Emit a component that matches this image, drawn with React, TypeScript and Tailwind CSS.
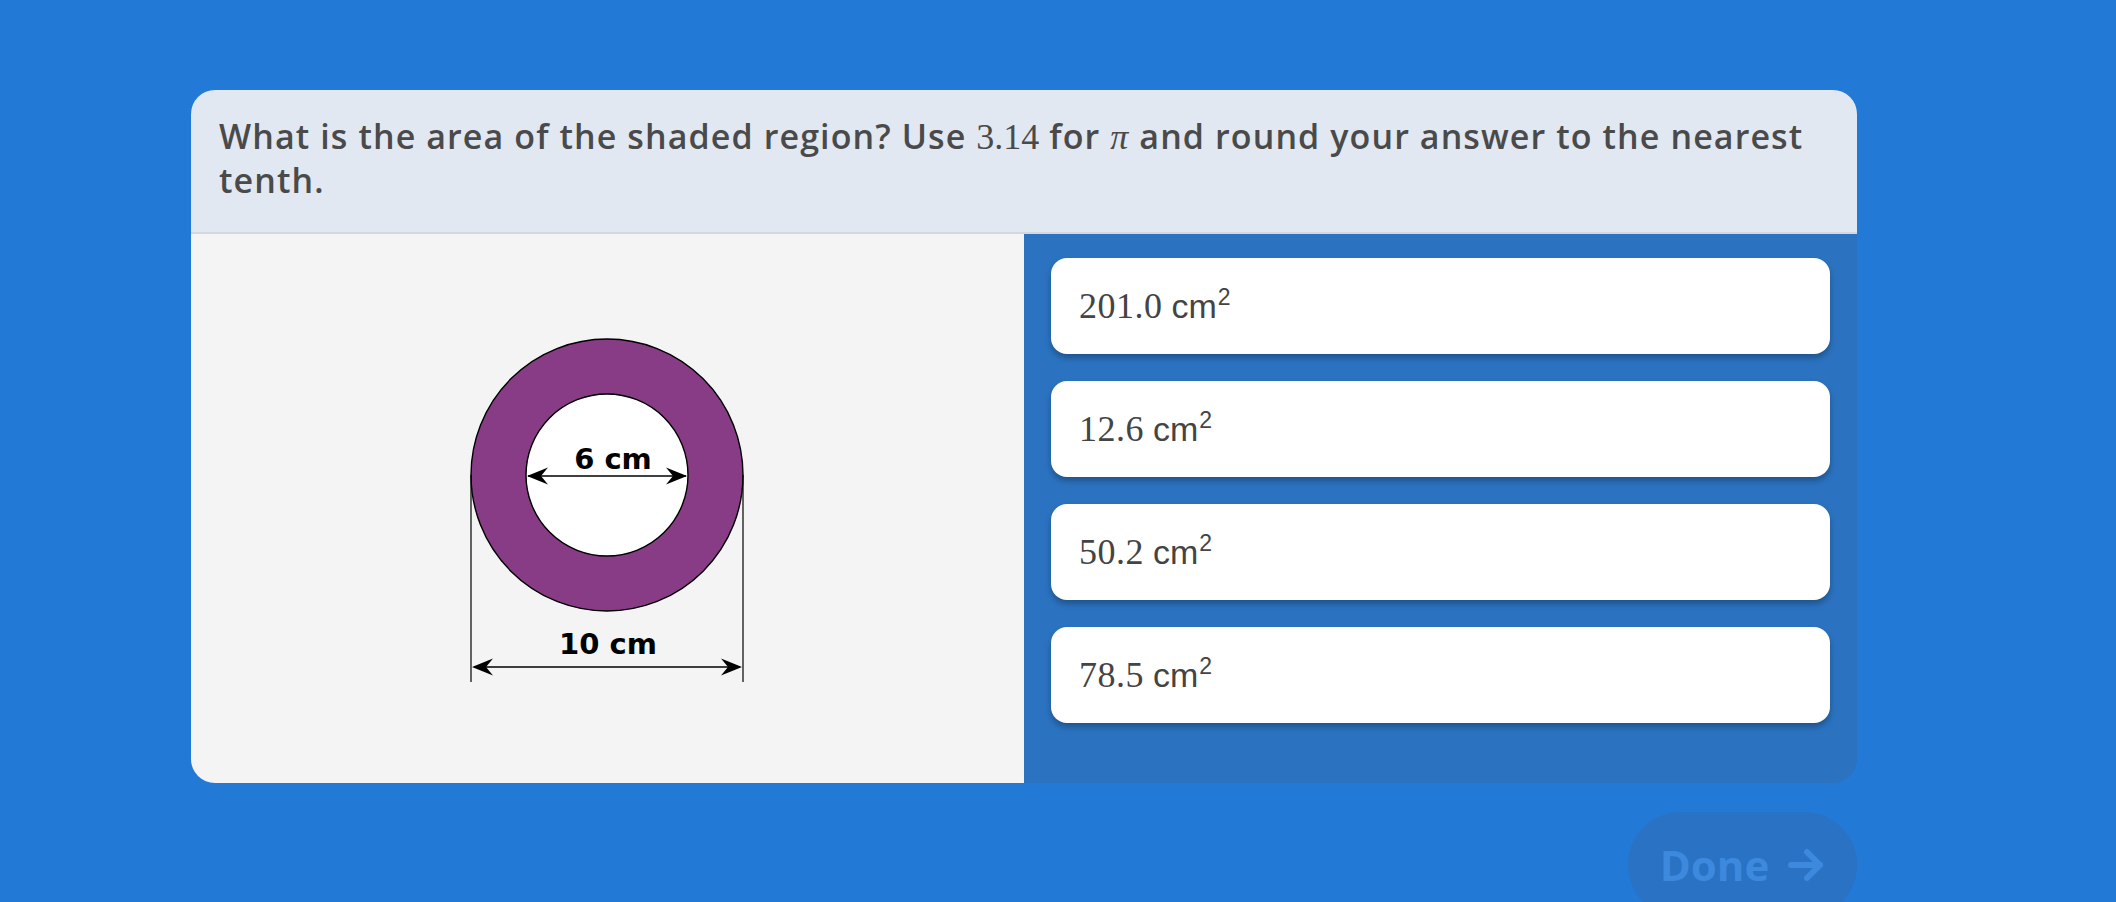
import React from "react";

const answers = ["201.0", "12.6", "50.2", "78.5"];

function Arrow({ x, y, dir }: { x: number; y: number; dir: 1 | -1 }) {
  // dart-shaped arrowhead, tip at (x, y), pointing in dir
  const d = dir;
  return (
    <path
      d={`M ${x} ${y} L ${x - d * 21} ${y - 8.5} L ${x - d * 14} ${y} L ${x - d * 21} ${y + 8.5} Z`}
      fill="#000"
    />
  );
}

function Ring() {
  return (
    <svg width="295" height="360" viewBox="0 0 295 360" className="block">
      <circle cx="147" cy="146" r="136" fill="#883c86" stroke="#000" strokeWidth="1.4" />
      <circle cx="147" cy="146" r="81" fill="#fff" stroke="#000" strokeWidth="1.4" />
      <line x1="11" y1="146" x2="11" y2="353" stroke="#000" strokeWidth="1.2" />
      <line x1="283" y1="146" x2="283" y2="353" stroke="#000" strokeWidth="1.2" />
      <line x1="14" y1="338" x2="280" y2="338" stroke="#000" strokeWidth="1.4" />
      <Arrow x={12} y={338} dir={-1} />
      <Arrow x={282} y={338} dir={1} />
      <line x1="68" y1="147" x2="226" y2="147" stroke="#000" strokeWidth="1.4" />
      <Arrow x={67} y={147} dir={-1} />
      <Arrow x={227} y={147} dir={1} />
      <text
        x="153"
        y="140"
        textAnchor="middle"
        fontFamily="'DejaVu Sans', sans-serif"
        fontWeight="700"
        fontSize="29"
        fill="#000"
      >
        6 cm
      </text>
      <text
        x="148"
        y="325"
        textAnchor="middle"
        fontFamily="'DejaVu Sans', sans-serif"
        fontWeight="700"
        fontSize="29"
        fill="#000"
      >
        10 cm
      </text>
    </svg>
  );
}

export default function App() {
  return (
    <div className="w-full h-[902px] overflow-hidden bg-[#2279d6] font-['Open_Sans',sans-serif]">
      <div className="ml-[191px] pt-[90px] w-[1666px]">
        {/* Question */}
        <div className="bg-[#e1e8f1] rounded-t-[24px] h-[144px] px-[28px] pt-[25px] border-b-2 border-[#d3d8df]">
          <p className="text-[34px] leading-[43px] font-semibold text-[#4a4a4a] tracking-[1.1px]">
            What is the area of the shaded region? Use{" "}
            <span className="font-['Liberation_Serif',serif] font-normal text-[36px] tracking-normal">3.14</span> for{" "}
            <span className="font-['Liberation_Serif',serif] font-normal italic text-[36px]">π</span> and round
            your answer to the nearest tenth.
          </p>
        </div>

        <div className="grid grid-cols-[833px_833px] h-[549px]">
          {/* Figure */}
          <div className="bg-[#f4f4f4] rounded-bl-[24px] flex items-center justify-center">
            <Ring />
          </div>

          {/* Choices */}
          <div className="bg-[#2b73c1] rounded-br-[24px] px-[27px] pt-[24px] flex flex-col gap-[27px]">
            {answers.map((a) => (
              <button
                key={a}
                className="h-[96px] w-full bg-white rounded-[16px] shadow-[0_4px_6px_rgba(0,0,0,0.28)] flex items-center px-[28px] text-[#444444]"
              >
                <span className="font-['Liberation_Serif',serif] text-[36px] leading-none tracking-[0.5px]">{a}</span>
                <span className="ml-[9px] font-['Liberation_Sans',sans-serif] text-[34px] leading-none">
                  cm<sup className="text-[23px] relative top-[-13px] ml-[1px]">2</sup>
                </span>
              </button>
            ))}
          </div>
        </div>

        {/* Footer */}
        <div className="flex justify-end mt-[29px]">
          <button className="w-[229px] h-[106px] rounded-full bg-[#2a72c4] flex items-center justify-center gap-[18px] text-[#3d89dd]">
            <span className="font-['Open_Sans',sans-serif] font-bold text-[42px] leading-none">Done</span>
            <svg width="38" height="36" viewBox="0 0 38 36" fill="none" stroke="currentColor" strokeWidth="6" strokeLinecap="round" strokeLinejoin="round">
              <path d="M4 18 H33" />
              <path d="M20 5 L33 18 L20 31" />
            </svg>
          </button>
        </div>
      </div>
    </div>
  );
}
